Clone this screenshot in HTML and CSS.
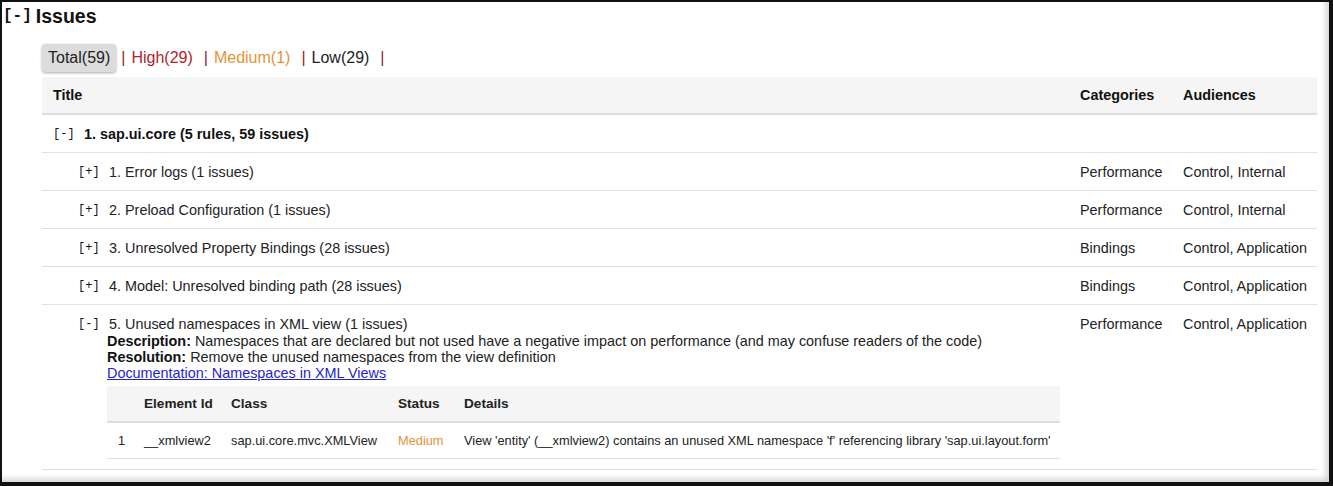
FILE: index.html
```html
<!DOCTYPE html>
<html>
<head>
<meta charset="utf-8">
<link rel="stylesheet" href="styles.css">
</head>
<body>
<div class="frame">
  <h1 class="heading"><span class="toggle-h">[-]</span>Issues</h1>
  <div class="content">
    <div class="filters">
      <span class="filter active">Total(59)</span><span class="sep">|</span>
      <span class="filter high">High(29)</span><span class="sep">|</span>
      <span class="filter medium">Medium(1)</span><span class="sep">|</span>
      <span class="filter low">Low(29)</span><span class="sep">|</span>
    </div>
    <table class="issues">
      <colgroup>
        <col class="c-title">
        <col class="c-cat">
        <col class="c-aud">
      </colgroup>
      <thead>
        <tr><th>Title</th><th>Categories</th><th>Audiences</th></tr>
      </thead>
      <tbody>
        <tr class="group">
          <td colspan="3"><span class="tg">[-]</span>1. sap.ui.core (5 rules, 59 issues)</td>
        </tr>
        <tr class="rule">
          <td class="rt"><span class="tg">[+]</span>1. Error logs (1 issues)</td>
          <td>Performance</td><td>Control, Internal</td>
        </tr>
        <tr class="rule">
          <td class="rt"><span class="tg">[+]</span>2. Preload Configuration (1 issues)</td>
          <td>Performance</td><td>Control, Internal</td>
        </tr>
        <tr class="rule">
          <td class="rt"><span class="tg">[+]</span>3. Unresolved Property Bindings (28 issues)</td>
          <td>Bindings</td><td>Control, Application</td>
        </tr>
        <tr class="rule">
          <td class="rt"><span class="tg">[+]</span>4. Model: Unresolved binding path (28 issues)</td>
          <td>Bindings</td><td>Control, Application</td>
        </tr>
        <tr class="rule open">
          <td class="rt">
            <div class="first"><span class="tg">[-]</span>5. Unused namespaces in XML view (1 issues)</div>
            <div class="info">
              <div><b>Description:</b> Namespaces that are declared but not used have a negative impact on performance (and may confuse readers of the code)</div>
              <div><b>Resolution:</b> Remove the unused namespaces from the view definition</div>
              <div><a href="#" class="doc">Documentation: Namespaces in XML Views</a></div>
              <table class="inner">
                <colgroup>
                  <col class="i-n"><col class="i-id"><col class="i-cls"><col class="i-st"><col>
                </colgroup>
                <thead>
                  <tr><th></th><th>Element Id</th><th>Class</th><th>Status</th><th>Details</th></tr>
                </thead>
                <tbody>
                  <tr>
                    <td>1</td><td>__xmlview2</td><td>sap.ui.core.mvc.XMLView</td><td class="medium">Medium</td>
                    <td>View 'entity' (__xmlview2) contains an unused XML namespace 'f' referencing library 'sap.ui.layout.form'</td>
                  </tr>
                </tbody>
              </table>
            </div>
          </td>
          <td>Performance</td><td>Control, Application</td>
        </tr>
      </tbody>
    </table>
  </div>
</div>
</body>
</html>
```

FILE: styles.css
```css
html, body {
  margin: 0;
  padding: 0;
  background: #fff;
}
body {
  font-family: "Liberation Sans", Arial, sans-serif;
  font-size: 14.4px;
  color: #222;
}
.frame {
  box-sizing: border-box;
  width: 1333px;
  height: 486px;
  border-style: solid;
  border-color: #111;
  border-width: 2px 4px 4px 2px;
  box-shadow: inset -5px -5px 6px -2px rgba(0,0,0,0.18);
  overflow: hidden;
}
.heading {
  margin: 0;
  padding: 2px 0 0 1px;
  height: 24px;
  line-height: 22px;
  font-size: 19.5px;
  font-weight: bold;
  color: #111;
  display: flex;
  align-items: center;
}
.toggle-h {
  font-family: "Liberation Mono", monospace;
  font-size: 16px;
  font-weight: bold;
  margin-right: 4px;
}
.content {
  padding: 16px 12px 0 40px;
}
.filters {
  display: flex;
  align-items: center;
  height: 28px;
  font-size: 16px;
  margin-bottom: 5px;
}
.filter {
  padding: 0 6px;
  line-height: 28px;
  height: 28px;
}
.filter.active {
  background: #dcdcdc;
  border-radius: 4px;
  box-shadow: 0 1px 3px rgba(0,0,0,0.35);
  color: #222;
}
.filter.high { color: #b0232a; }
.filter.medium { color: #e49339; }
.filter.low { color: #222; }
.sep {
  color: #8a2a24;
  margin-left: 5px;
}
.issues {
  width: 1275px;
  border-collapse: collapse;
  table-layout: fixed;
}
.c-cat { width: 103px; }
.c-aud { width: 145px; }
.issues th {
  text-align: left;
  font-weight: bold;
  background: #f5f5f5;
  padding: 10px 11px;
  line-height: 16px;
  border-bottom: 2px solid #ddd;
  color: #111;
}
.issues > tbody > tr > td {
  padding: 11px 11px 10px;
  line-height: 16px;
  border-bottom: 1px solid #e0e0e0;
  vertical-align: top;
  white-space: nowrap;
}
.group td {
  font-weight: bold;
  color: #111;
}
.tg {
  display: inline-block;
  width: 31px;
  height: 16px;
  line-height: 16px;
  vertical-align: top;
  font-family: "Liberation Mono", monospace;
  font-size: 12px;
  font-weight: normal;
  color: #111;
}
.rule .rt { padding-left: 36px; }
.open .first { line-height: 17px; height: 17px; }
.info {
  padding-left: 29px;
  line-height: 16px;
}
.info b { color: #111; }
.doc {
  color: #2424cc;
  text-decoration: underline;
}
.inner {
  margin-top: 5px;
  width: 953px;
  border-collapse: collapse;
  table-layout: fixed;
  font-size: 13px;
}
.i-n { width: 26px; }
.i-id { width: 87px; }
.i-cls { width: 167px; }
.i-st { width: 66px; }
.inner th {
  text-align: left;
  background: #f5f5f5;
  padding: 10px 11px 9px;
  line-height: 16px;
  border-bottom: 2px solid #ddd;
  font-weight: bold;
  color: #222;
  font-size: 13.6px;
}
.inner td {
  padding: 10px 11px 9px;
  line-height: 16px;
  border-bottom: 1px solid #e0e0e0;
  white-space: nowrap;
  font-size: 12.8px;
}
.inner td.medium { color: #e49339; }
```
